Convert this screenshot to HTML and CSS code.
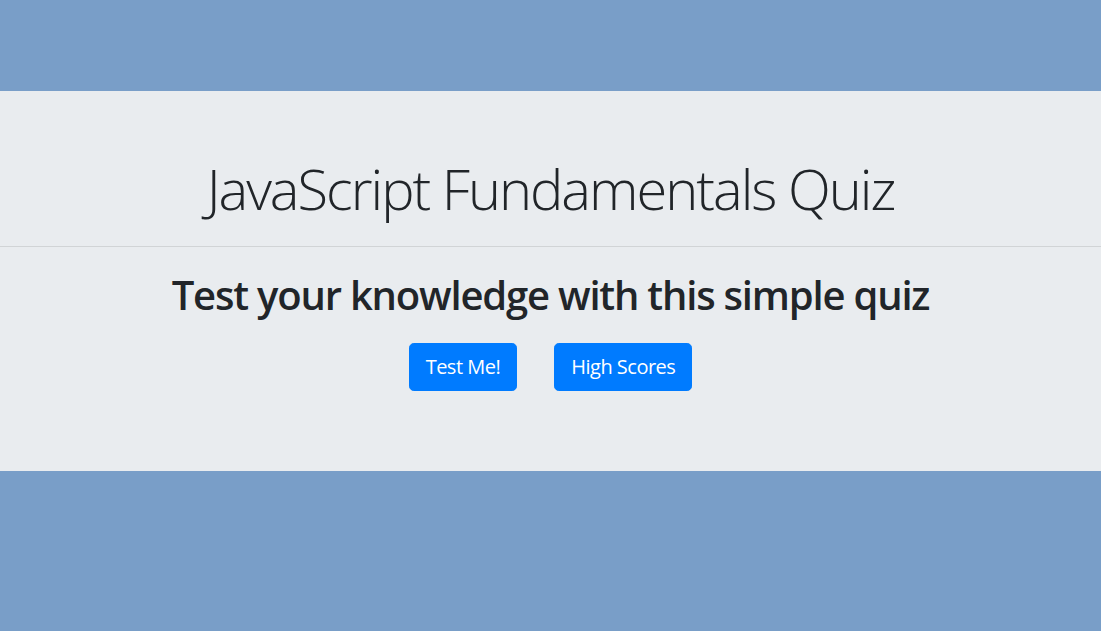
FILE: index.html
```html
<!DOCTYPE html>
<html lang="en">
<head>
<meta charset="utf-8">
<title>JavaScript Fundamentals Quiz</title>
<link rel="stylesheet" href="styles.css">
</head>
<body>
<main class="page">
  <section class="jumbotron">
    <h1 class="display">JavaScript Fundamentals Quiz</h1>
    <hr class="rule">
    <h2 class="lead">Test your knowledge with this simple quiz</h2>
    <div class="actions">
      <button class="btn" type="button">Test Me!</button>
      <button class="btn" type="button">High Scores</button>
    </div>
  </section>
</main>
</body>
</html>
```
FILE: styles.css
```css
html, body {
  margin: 0;
  padding: 0;
}
body {
  background: #799ec8;
  font-family: "Open Sans", "Noto Sans", sans-serif;
  color: #212529;
  height: 631px;
  overflow: hidden;
}
.page {
  padding-top: 91px;
}
.jumbotron {
  display: flex;
  flex-direction: column;
  align-items: stretch;
  background: #e9ecef;
  padding: 64px 0;
  text-align: center;
}
.display {
  margin: 0 0 8px;
  font-size: 56px;
  font-weight: 300;
  line-height: 1.2;
  letter-spacing: -2px;
}
.rule {
  width: 100%;
  margin: 16px 0;
  border: 0;
  border-top: 1px solid rgba(0, 0, 0, 0.1);
}
.lead {
  margin: 8px 0 0;
  font-size: 40px;
  font-weight: 600;
  line-height: 48px;
  letter-spacing: -1.2px;
}
.actions {
  display: flex;
  justify-content: center;
  gap: 37px;
  margin-top: 24px;
  margin-bottom: 16px;
}
.btn {
  font-family: inherit;
  font-size: 20px;
  line-height: 30px;
  letter-spacing: -0.5px;
  padding: 8px 16px;
  border: 1px solid #007bff;
  border-radius: 4.8px;
  background: #007bff;
  color: #fff;
  cursor: pointer;
}
```
